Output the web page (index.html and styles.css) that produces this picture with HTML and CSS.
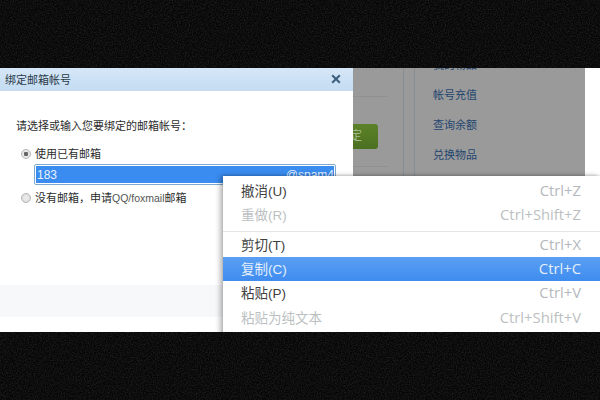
FILE: index.html
```html
<!DOCTYPE html>
<html lang="zh-CN">
<head>
<meta charset="utf-8">
<title>绑定邮箱帐号</title>
<link rel="stylesheet" href="styles.css">
</head>
<body>
<main class="shot">
  <section class="dialog">
    <header class="dialog-title">
      <span>绑定邮箱帐号</span>
      <svg class="close" viewBox="0 0 10 10" width="10" height="10" aria-hidden="true"><path d="M1.2 1.2 8.8 8.8M8.8 1.2 1.2 8.8"/></svg>
    </header>
    <div class="dialog-body">
      <p class="prompt">请选择或输入您要绑定的邮箱帐号：</p>
      <div class="option"><span class="radio on"></span>使用已有邮箱</div>
      <div class="field"><span class="selected"><span>183</span><span>@spam4</span></span></div>
      <div class="option second"><span class="radio"></span><span>没有邮箱，申请<span class="latin">QQ/foxmail</span>邮箱</span></div>
    </div>
    <div class="dialog-foot"></div>
  </section>
  <section class="backdrop">
    <div class="behind">
      <div class="rule"></div>
      <div class="confirm">定</div>
      <div class="rule second"></div>
    </div>
    <nav class="links">
      <a>我的物品</a>
      <a>帐号充值</a>
      <a>查询余额</a>
      <a>兑换物品</a>
    </nav>
  </section>
  <div class="page-edge"></div>
  <ul class="menu">
    <li><span>撤消(U)</span><span class="key">Ctrl+Z</span></li>
    <li class="off"><span>重做(R)</span><span class="key">Ctrl+Shift+Z</span></li>
    <li class="sep"></li>
    <li><span>剪切(T)</span><span class="key">Ctrl+X</span></li>
    <li class="active"><span>复制(C)</span><span class="key">Ctrl+C</span></li>
    <li><span>粘贴(P)</span><span class="key">Ctrl+V</span></li>
    <li class="off"><span>粘贴为纯文本</span><span class="key">Ctrl+Shift+V</span></li>
  </ul>
</main>
</body>
</html>
```
FILE: styles.css
```css
* { box-sizing: border-box; }
html, body { margin: 0; height: 400px; overflow: hidden; }
body {
  padding-top: 68px;
  background-color: #060606;
  background-image: url("data:image/svg+xml,%3Csvg xmlns='http://www.w3.org/2000/svg' width='256' height='256'%3E%3Cfilter id='n'%3E%3CfeTurbulence type='fractalNoise' baseFrequency='.75' numOctaves='2' stitchTiles='stitch'/%3E%3CfeColorMatrix values='0 0 0 0 1 0 0 0 0 1 0 0 0 0 1 .9 0 0 0 -.33'/%3E%3C/filter%3E%3Crect width='256' height='256' filter='url(%23n)' opacity='.22'/%3E%3C/svg%3E");
  font-family: "Liberation Sans", "Noto Sans CJK SC", sans-serif;
}
.shot {
  position: relative;
  display: flex;
  width: 600px;
  height: 264px;
  overflow: hidden;
  background: #fff;
}
.dialog {
  display: flex;
  flex-direction: column;
  flex: 0 0 353px;
  background: #fff;
  color: #2c2c2c;
  font-size: 11px;
}
.dialog-title {
  display: flex;
  align-items: center;
  justify-content: space-between;
  height: 23px;
  padding: 0 12px 0 5px;
  background: linear-gradient(#d6e7f7, #c4dcf2);
  border-bottom: 1px solid #c9dcec;
  color: #2b3a48;
}
.close { fill: none; stroke: #3d5f7e; stroke-width: 2.1; }
.dialog-body { flex: 1; padding: 27px 16px 0; }
.prompt { margin: 0 0 12px; line-height: 16px; }
.option { display: flex; align-items: center; gap: 4px; padding-left: 5px; line-height: 16px; }
.option.second { margin-top: 5px; }
.latin { font-size: 10.5px; color: #555; }
.radio {
  width: 10px;
  height: 10px;
  border-radius: 50%;
  border: 1px solid #b4b4b4;
  background: radial-gradient(#eee, #d8d8d8);
}
.radio.on { background: radial-gradient(#666 0 2px, #e8e8e8 2.5px); }
.field {
  display: flex;
  width: 302px;
  height: 21px;
  margin: 2px 0 0 18px;
  padding: 1px;
  border: 1px solid #7fa9cf;
  border-radius: 2px;
  background: #fff;
}
.selected {
  display: flex;
  flex: 1;
  justify-content: space-between;
  align-items: center;
  padding: 0 0 0 1px;
  background: #3a8cf0;
  color: #e6f1fc;
  font-size: 12px;
}
.dialog-foot {
  height: 32px;
  margin-bottom: 15px;
  background: #f7f8fa;
}
.backdrop {
  display: flex;
  flex: 0 0 232px;
  background: #9a9a9a;
  overflow: hidden;
}
.behind { flex: 0 0 50px; padding-top: 28px; }
.rule { height: 1px; background: #909090; margin-right: 15px; }
.confirm {
  width: 25px;
  height: 25px;
  margin-top: 27px;
  background: linear-gradient(#5b8229, #4b7021);
  border-radius: 0 3px 3px 0;
  color: #a3b98a;
  font-size: 12px;
  line-height: 25px;
  text-indent: -3px;
}
.rule.second { margin-top: 17px; }
.links {
  display: flex;
  flex: 1;
  flex-direction: column;
  gap: 14px;
  margin-top: -11px;
  padding-left: 29px;
  height: 275px;
  font-size: 11px;
  line-height: 16px;
  color: #24466f;
  border-left: 1px solid #868e94;
  box-shadow: inset 10px 0 0 #9a9a9a, inset 11px 0 0 #868e94;
}
.page-edge { flex: 1; background: #fff; }
.menu {
  position: absolute;
  left: 223px;
  top: 108px;
  width: 377px;
  height: 160px;
  margin: 0;
  padding: 3px 0 0;
  list-style: none;
  background: #fff;
  box-shadow: -3px 0 5px rgba(0,0,0,.28), 0 -1px 2px rgba(0,0,0,.12);
  color: #404040;
  font-size: 13.5px;
}
.menu li {
  display: flex;
  align-items: center;
  justify-content: space-between;
  height: 24.3px;
  padding: 0 19px 2px 18px;
}
.menu .sep {
  height: 1px;
  margin: 3px 0 1px;
  padding: 0;
  background: #e6e6e6;
}
.key { color: #b4b8bc; font-family: "Open Sans", sans-serif; font-size: 14.8px; }
.menu .off, .menu .off .key { color: #bcbfc2; }
.menu .active {
  background: linear-gradient(#5a9ff2, #3f8cf0);
  color: #e4effb;
}
.menu .active .key { color: #e4effb; }
```
